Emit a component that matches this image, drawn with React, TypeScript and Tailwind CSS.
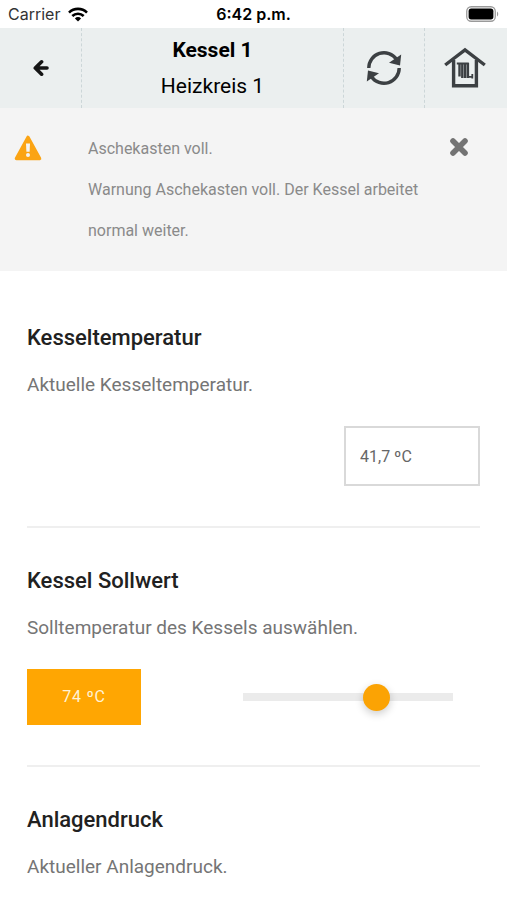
import { useState } from "react";
import type { ReactNode } from "react";

function WifiIcon() {
  return (
    <svg width="20" height="15" viewBox="0 0 20 15" fill="none" stroke="#000" strokeWidth="2.6" aria-hidden="true">
      <path d="M1 5.6a12.8 12.8 0 0 1 18 0" />
      <path d="M4.3 9a8.2 8.2 0 0 1 11.4 0" />
      <path d="M10 14.4 6.9 11.4a4.4 4.4 0 0 1 6.2 0Z" fill="#000" stroke="none" />
    </svg>
  );
}

function BatteryIcon() {
  return (
    <svg width="33" height="16" viewBox="0 0 33 16" aria-hidden="true">
      <rect x="0.75" y="0.75" width="28.5" height="14.5" rx="4.5" fill="#fff" stroke="#9a9a9a" strokeWidth="1.3" />
      <rect x="2.6" y="2.6" width="24.8" height="10.8" rx="2.6" fill="#000" />
      <path d="M31 5.5v5c1.6-.8 1.6-4.2 0-5Z" fill="#9a9a9a" />
    </svg>
  );
}

function BackIcon() {
  return (
    <svg width="16" height="18" viewBox="0 0 16 18" fill="none" stroke="#151515" strokeWidth="3.6" strokeLinecap="round" strokeLinejoin="round" aria-hidden="true">
      <path d="M8.6 2.8 2.3 9l6.3 6.2M3.5 9h10.5" />
    </svg>
  );
}

function WarningIcon() {
  return (
    <svg width="28" height="26" viewBox="0 0 28 26" aria-hidden="true">
      <path d="M14 2.5 25.5 23.500h-23Z" fill="#fba414" stroke="#fba414" strokeWidth="3.6" strokeLinejoin="round" />
      <path d="M12 8.500h4l-.4 8.200h-3.200Z" fill="#f4f4f4" />
      <circle cx="14" cy="20" r="2" fill="#f4f4f4" />
    </svg>
  );
}

function RefreshIcon() {
  return (
    <svg width="36" height="36" viewBox="0 0 36 36" aria-hidden="true">
      <g fill="none" stroke="#3c4043" strokeWidth="3.4">
        <path d="M2.8 18A15.2 15.2 0 0 1 30.5 9.3" />
        <path d="M33.2 18A15.2 15.2 0 0 1 5.5 26.7" />
      </g>
      <g fill="#3c4043">
        <path d="M35.2 4.5 34 15.500 23 12.800Z" />
        <path d="M.8 31.500 2 20.500 13 23.200Z" />
      </g>
    </svg>
  );
}

function HouseIcon() {
  return (
    <svg width="42" height="42" viewBox="0 0 42 42" fill="none" stroke="#3c4043" aria-hidden="true">
      <path d="M1.2 18 21 2.800 40.800 18" strokeWidth="3.4" />
      <path d="M9.6 13v25.800h22.800V13" strokeWidth="3.4" />
      <path d="M15.500 16v13.500M18.300 16v15M21.100 16v15M23.900 16v15" strokeWidth="2.4" />
      <path d="M12.800 16.500h12M24 29.800h4.500M28.300 27v4.500" strokeWidth="1.8" />
    </svg>
  );
}

function CloseIcon() {
  return (
    <svg width="20" height="20" viewBox="0 0 20 20" stroke="#737373" strokeWidth="5.6" strokeLinecap="round" aria-hidden="true">
      <path d="M4 4l12 12M16 4 4 16" />
    </svg>
  );
}

function Section({ title, text, children }: { title: string; text: string; children?: ReactNode }) {
  return (
    <section className="border-b-2 border-[#efefef] pt-[39px] pb-10">
      <h2 className="text-[22px] leading-7 font-medium text-[#212121]">{title}</h2>
      <p className="mt-[19px] text-[19px] leading-7 text-[#757575]">{text}</p>
      {children}
    </section>
  );
}

export default function App() {
  const [target, setTarget] = useState(74);

  return (
    <div className="h-screen overflow-hidden bg-white font-[Roboto,sans-serif]">
      <div className="grid h-7 grid-cols-3 items-center px-2 font-[Inter,sans-serif] text-base text-black">
        <span className="flex items-center gap-2 text-[#333]">
          Carrier <WifiIcon />
        </span>
        <span className="text-center font-semibold whitespace-nowrap">6:42 p.m.</span>
        <span className="flex justify-end">
          <BatteryIcon />
        </span>
      </div>

      <header className="grid h-20 grid-cols-[82px_1fr_81px_82px] divide-x divide-dashed divide-[#ccd6d8] bg-[#ebefef] text-black">
        <button type="button" aria-label="Zurück" className="flex items-center justify-center">
          <BackIcon />
        </button>
        <div className="py-1 text-center text-[21px] leading-9">
          <h1 className="font-bold">Kessel 1</h1>
          <p>Heizkreis 1</p>
        </div>
        <button type="button" aria-label="Aktualisieren" className="flex items-center justify-center">
          <RefreshIcon />
        </button>
        <button type="button" aria-label="Heizkreis" className="flex items-center justify-center pr-0.5">
          <HouseIcon />
        </button>
      </header>

      <div role="alert" className="flex items-start bg-[#f4f4f4] px-3.5 py-5">
        <div className="mt-[7px] w-[74px] shrink-0">
          <WarningIcon />
        </div>
        <div className="flex-1 text-[16px] leading-[41px] text-[#8a8a8a]">
          <p>Aschekasten voll.</p>
          <p>Warnung Aschekasten voll. Der Kessel arbeitet normal weiter.</p>
        </div>
        <button type="button" aria-label="Meldung schließen" className="mt-[9px] mr-6 ml-6">
          <CloseIcon />
        </button>
      </div>

      <main className="px-[27px] pt-3.5">
        <Section title="Kesseltemperatur" text="Aktuelle Kesseltemperatur.">
          <div className="mt-[27px] flex justify-end">
            <input
              readOnly
              aria-label="Kesseltemperatur"
              value="41,7 ºC"
              className="h-[60px] w-[136px] border-2 border-[#d9d9d9] bg-white px-3.5 text-[16px] text-[#666] outline-none"
            />
          </div>
        </Section>

        <Section title="Kessel Sollwert" text="Solltemperatur des Kessels auswählen.">
          <div className="mt-[27px] flex items-center justify-between">
            <button type="button" className="h-14 w-[114px] bg-[#ffa602] text-[16px] tracking-wider text-[#fff3d6]">
              {target} ºC
            </button>
            <input
              type="range"
              aria-label="Kessel Sollwert"
              min={51}
              max={86}
              value={target}
              onChange={(e) => setTarget(Number(e.target.value))}
              className="mr-[27px] h-2 w-[210px] appearance-none bg-[#ebebeb] outline-none [&::-webkit-slider-thumb]:h-[27px] [&::-webkit-slider-thumb]:w-[27px] [&::-webkit-slider-thumb]:appearance-none [&::-webkit-slider-thumb]:rounded-full [&::-webkit-slider-thumb]:bg-[#fba304] [&::-webkit-slider-thumb]:shadow-[0_3px_8px_rgba(0,0,0,0.2)]"
            />
          </div>
        </Section>

        <Section title="Anlagendruck" text="Aktueller Anlagendruck." />
      </main>
    </div>
  );
}
